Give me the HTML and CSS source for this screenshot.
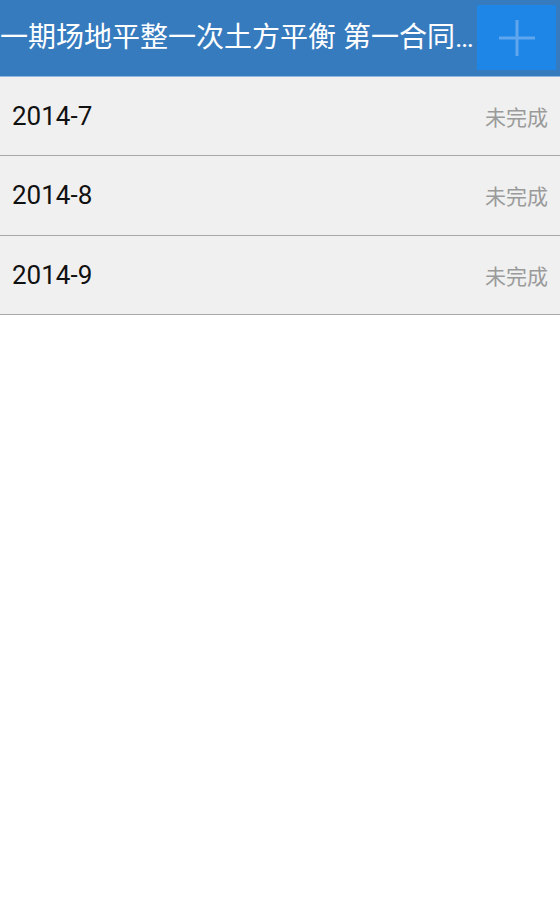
FILE: index.html
```html
<!DOCTYPE html>
<html lang="zh-CN">
<head>
<meta charset="utf-8">
<link rel="stylesheet" href="styles.css">
</head>
<body>
<header class="bar">
  <div class="title">一期场地平整一次土方平衡 第一合同段土方工程</div>
  <button class="add" aria-label="添加">
    <svg width="40" height="40" viewBox="0 0 40 40"><path d="M20 2V38M2 20H38" stroke="#5fa6ee" stroke-width="3"/></svg>
  </button>
</header>
<ul class="list">
  <li class="row"><span class="date">2014-7</span><span class="status">未完成</span></li>
  <li class="row"><span class="date">2014-8</span><span class="status">未完成</span></li>
  <li class="row"><span class="date">2014-9</span><span class="status">未完成</span></li>
</ul>
</body>
</html>
```
FILE: styles.css
```css
html, body {
  margin: 0;
  padding: 0;
  background: #ffffff;
  font-family: Roboto, "Noto Sans CJK SC", sans-serif;
}
.bar {
  height: 76px;
  background: #377bbf;
  display: flex;
  align-items: flex-start;
  border-bottom: 1px solid #8fb6dc;
}
.title {
  flex: 1;
  min-width: 0;
  color: #ffffff;
  font-size: 28px;
  line-height: 76px;
  white-space: nowrap;
  overflow: hidden;
  text-overflow: ellipsis;
}
.add {
  margin: 5px 4px 0 0;
  width: 79px;
  height: 65px;
  border: 0;
  padding: 0;
  background: #1e86e6;
  display: flex;
  align-items: center;
  justify-content: center;
}
.list {
  list-style: none;
  margin: 0;
  padding: 0;
}
.row {
  height: 78px;
  background: #f0f0f0;
  border-bottom: 1px solid #a8a8a8;
  display: flex;
  align-items: center;
  justify-content: space-between;
  padding: 0 12px;
}
.row + .row {
  height: 78.5px;
}
.date {
  font-size: 26px;
  color: #111111;
}
.status {
  font-size: 21px;
  color: #9a9a9a;
}
```
